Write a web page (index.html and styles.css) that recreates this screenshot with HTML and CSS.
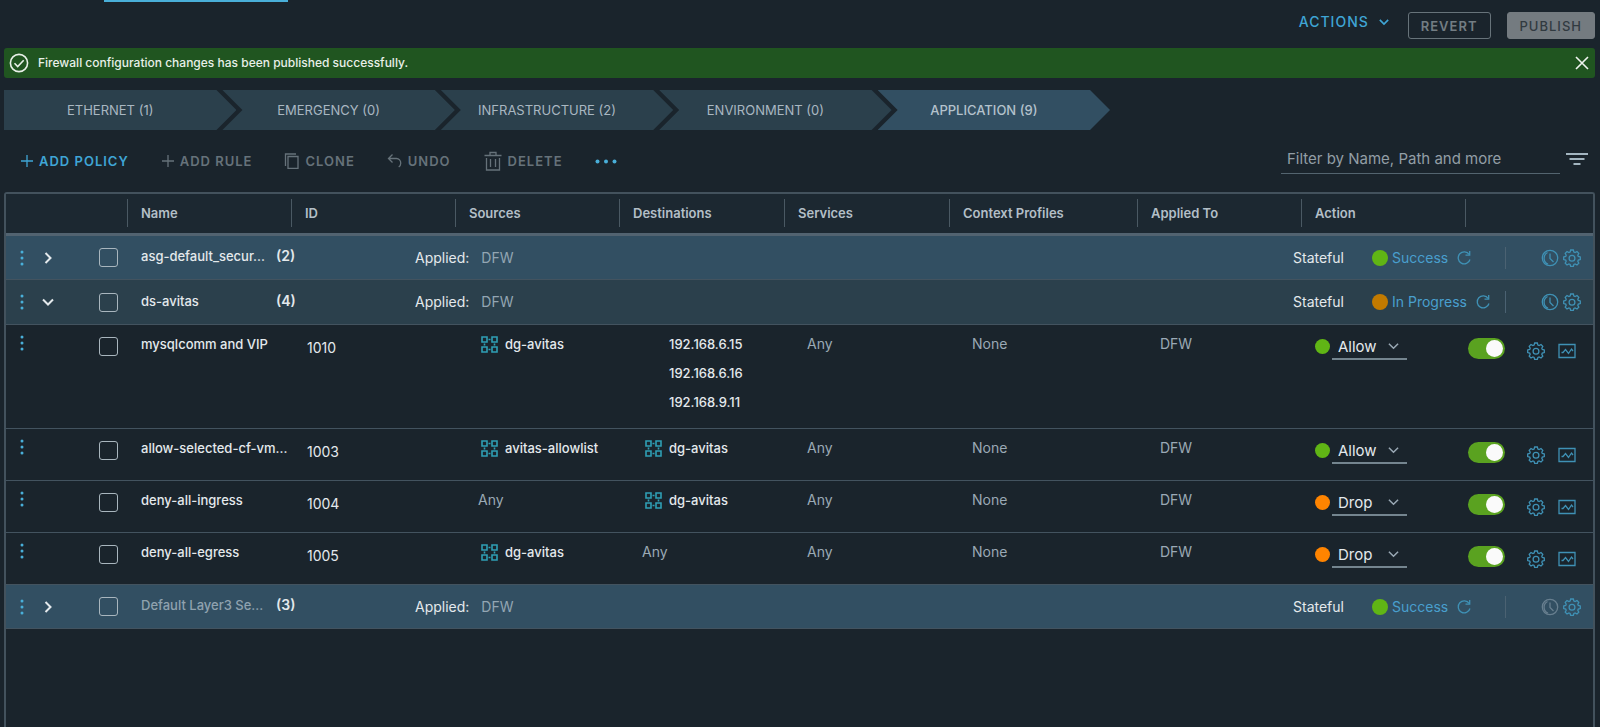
FILE: index.html
```html
<!DOCTYPE html>
<html lang="en">
<head>
<meta charset="utf-8">
<title>Distributed Firewall</title>
<link rel="stylesheet" href="styles.css">
</head>
<body>
<svg class="sprite" aria-hidden="true">
  <symbol id="dots-v" viewBox="0 0 4 16"><circle cx="2" cy="2" r="1.5"/><circle cx="2" cy="8" r="1.5"/><circle cx="2" cy="14" r="1.5"/></symbol>
  <symbol id="dots-h" viewBox="0 0 22 5"><circle cx="2.5" cy="2.5" r="2"/><circle cx="11" cy="2.5" r="2"/><circle cx="19.500" cy="2.500" r="2"/></symbol>
  <symbol id="chev" viewBox="0 0 12 12"><path d="M1 3.500 L6 8.500 L11 3.500"/></symbol>
  <symbol id="plus" viewBox="0 0 14 14"><path d="M7 1v12M1 7h12"/></symbol>
  <symbol id="gear" viewBox="0 0 18 18"><path d="M7.700 1h2.600l.6 2 1.200.5 1.900-1 1.800 1.800-1 1.900.5 1.200 2 .6v2.500l-2 .6-.5 1.200 1 1.900-1.800 1.800-1.900-1-1.200.5-.6 2H7.700l-.6-2-1.200-.5-1.900 1-1.800-1.800 1-1.900-.5-1.200-2-.6V8l2-.6.5-1.200-1-1.900L4 2.500l1.900 1 1.200-.5z"/><circle cx="9" cy="9.200" r="2.900"/></symbol>
  <symbol id="clock" viewBox="0 0 18 18"><circle cx="9" cy="9" r="7.700"/><path d="M7 15.200A6.500 6.500 0 0 1 6.500 3.500"/><path d="M9 4.500v5l3.500 3.500"/></symbol>
  <symbol id="refresh" viewBox="0 0 16 16"><path d="M13.200 4.500A6 6 0 1 0 14 9.500"/><path d="M13.700 1v4.200H9.500"/></symbol>
  <symbol id="chart" viewBox="0 0 18 16"><path d="M1 1.500h16v13H1z"/><path d="M3.500 9.500h1.500l2.500-3 3 4 3-4.500 1.500 2"/></symbol>
  <symbol id="group" viewBox="0 0 17 17"><path d="M1 1h5v5H1zM11 1h5v5h-5zM1 11h5v5H1zM11 11h5v5h-5z"/><path d="M7.500 3.500h2M7.500 13.500h2M3.500 7.500v2M13.500 7.500v2"/></symbol>
</svg>

<header class="top">
  <div class="tab-line"></div>
  <div class="top-actions">
    <button class="actions" type="button">ACTIONS <svg class="i i10"><use href="#chev"/></svg></button>
    <button class="btn" type="button" disabled>REVERT</button>
    <button class="btn solid" type="button" disabled>PUBLISH</button>
  </div>
</header>

<main class="page">
  <div class="banner" role="status">
    <svg class="i i20" viewBox="0 0 20 20"><circle cx="10" cy="10" r="8.600"/><path d="M5.500 10.300l3.200 3.200 6-6.200"/></svg>
    <span class="banner-text">Firewall configuration changes has been published successfully.</span>
    <button class="icon-btn" type="button" aria-label="Close"><svg class="i i14" viewBox="0 0 14 14"><path d="M1 1l12 12M13 1L1 13"/></svg></button>
  </div>

  <nav class="steps">
    <a class="step first" href="#">ETHERNET (1)</a>
    <a class="step" href="#">EMERGENCY (0)</a>
    <a class="step" href="#">INFRASTRUCTURE (2)</a>
    <a class="step" href="#">ENVIRONMENT (0)</a>
    <a class="step active" href="#">APPLICATION (9)</a>
  </nav>

  <div class="toolbar">
    <div class="tools">
      <button class="tool on" type="button"><svg class="i i14"><use href="#plus"/></svg>ADD POLICY</button>
      <button class="tool" type="button"><svg class="i i14"><use href="#plus"/></svg>ADD RULE</button>
      <button class="tool" type="button"><svg class="i i16" viewBox="0 0 16 16"><path d="M4 3.500h10v12H4z"/><path d="M1.500 13V1H12"/></svg>CLONE</button>
      <button class="tool" type="button"><svg class="i i16" viewBox="0 0 16 16"><path d="M5.500 1.500L1.500 5.500l4 4M1.500 5.500h8a4.200 4.200 0 0 1 4.200 4.500v.5a4 4 0 0 1-2 3.500"/></svg>UNDO</button>
      <button class="tool" type="button"><svg class="i i20" viewBox="0 0 20 20"><path d="M1.500 4.500h17M7 4V1.500h6V4M3.500 7v12h13V7M7.500 8v8M12.500 8v8"/></svg>DELETE</button>
      <button class="tool on" type="button" aria-label="More"><svg class="dots-h"><use href="#dots-h"/></svg></button>
    </div>
    <div class="filter">
      <input class="filter-input" type="text" placeholder="Filter by Name, Path and more" aria-label="Filter">
      <button class="icon-btn" type="button" aria-label="Filter options"><svg class="i filter-icon" viewBox="0 0 24 14"><path d="M1 2h22M4.500 7h15M8.500 12h7"/></svg></button>
    </div>
  </div>

  <div class="grid">
    <table class="rules">
      <colgroup><col class="c-ctl"><col class="c-std"><col class="c-std"><col class="c-std"><col class="c-dst"><col class="c-dst"><col class="c-ctx"><col class="c-std"><col class="c-std"><col class="c-end"></colgroup>
      <thead>
        <tr>
          <td></td>
          <th><div class="th">Name</div></th><th><div class="th">ID</div></th><th><div class="th">Sources</div></th><th><div class="th">Destinations</div></th><th><div class="th">Services</div></th><th><div class="th">Context Profiles</div></th><th><div class="th">Applied To</div></th><th><div class="th">Action</div></th>
          <td><div class="th"></div></td>
        </tr>
      </thead>
      <tbody>
        <tr class="policy">
          <td><div class="ctl"><button class="icon-btn" type="button" aria-label="Menu"><svg class="dots-v"><use href="#dots-v"/></svg></button><button class="icon-btn expand shut" type="button" aria-label="Expand"><svg class="i i12"><use href="#chev"/></svg></button><input class="check" type="checkbox" aria-label="Select asg-default_secur..."></div></td>
          <td><div class="pname"><span>asg-default_secur...</span><b>(2)</b></div></td>
          <td colspan="5"><div class="applied">Applied:<span>DFW</span></div></td>
          <td colspan="3"><div class="state"><span class="mode">Stateful</span><div class="status"><i class="dot ok"></i><a href="#">Success</a><button class="icon-btn" type="button" aria-label="Refresh"><svg class="i i16"><use href="#refresh"/></svg></button></div><div class="ends"><button class="icon-btn" type="button" aria-label="Schedule"><svg class="i i18"><use href="#clock"/></svg></button><button class="icon-btn" type="button" aria-label="Settings"><svg class="i i18"><use href="#gear"/></svg></button></div></div></td>
        </tr>
        <tr class="policy open">
          <td><div class="ctl"><button class="icon-btn" type="button" aria-label="Menu"><svg class="dots-v"><use href="#dots-v"/></svg></button><button class="icon-btn expand" type="button" aria-label="Collapse"><svg class="i i12"><use href="#chev"/></svg></button><input class="check" type="checkbox" aria-label="Select ds-avitas"></div></td>
          <td><div class="pname"><span>ds-avitas</span><b>(4)</b></div></td>
          <td colspan="5"><div class="applied">Applied:<span>DFW</span></div></td>
          <td colspan="3"><div class="state"><span class="mode">Stateful</span><div class="status"><i class="dot busy"></i><a href="#">In Progress</a><button class="icon-btn" type="button" aria-label="Refresh"><svg class="i i16"><use href="#refresh"/></svg></button></div><div class="ends"><button class="icon-btn" type="button" aria-label="Schedule"><svg class="i i18"><use href="#clock"/></svg></button><button class="icon-btn" type="button" aria-label="Settings"><svg class="i i18"><use href="#gear"/></svg></button></div></div></td>
        </tr>
        <tr class="rule">
          <td><div class="ctl"><button class="icon-btn" type="button" aria-label="Menu"><svg class="dots-v"><use href="#dots-v"/></svg></button><input class="check" type="checkbox" aria-label="Select mysqlcomm and VIP"></div></td>
          <td class="name">mysqlcomm and VIP</td>
          <td class="id">1010</td>
          <td class="ref"><div class="obj"><svg class="i group"><use href="#group"/></svg>dg-avitas</div></td>
          <td class="ref"><div class="ip">192.168.6.15</div><div class="ip">192.168.6.16</div><div class="ip">192.168.9.11</div></td>
          <td class="dim">Any</td><td class="dim">None</td><td class="dim">DFW</td>
          <td class="act"><div class="pick"><i class="dot ok"></i><div class="drop"><select aria-label="Action"><option>Allow</option><option>Drop</option></select><svg class="i i12"><use href="#chev"/></svg></div></div></td>
          <td class="act"><div class="opts"><input class="toggle" type="checkbox" checked aria-label="Enabled"><button class="icon-btn" type="button" aria-label="Settings"><svg class="i i18"><use href="#gear"/></svg></button><button class="icon-btn" type="button" aria-label="Statistics"><svg class="i chart"><use href="#chart"/></svg></button></div></td>
        </tr>
        <tr class="rule">
          <td><div class="ctl"><button class="icon-btn" type="button" aria-label="Menu"><svg class="dots-v"><use href="#dots-v"/></svg></button><input class="check" type="checkbox" aria-label="Select allow-selected-cf-vm..."></div></td>
          <td class="name">allow-selected-cf-vm...</td>
          <td class="id">1003</td>
          <td class="ref"><div class="obj"><svg class="i group"><use href="#group"/></svg>avitas-allowlist</div></td>
          <td class="ref"><div class="obj"><svg class="i group"><use href="#group"/></svg>dg-avitas</div></td>
          <td class="dim">Any</td><td class="dim">None</td><td class="dim">DFW</td>
          <td class="act"><div class="pick"><i class="dot ok"></i><div class="drop"><select aria-label="Action"><option>Allow</option><option>Drop</option></select><svg class="i i12"><use href="#chev"/></svg></div></div></td>
          <td class="act"><div class="opts"><input class="toggle" type="checkbox" checked aria-label="Enabled"><button class="icon-btn" type="button" aria-label="Settings"><svg class="i i18"><use href="#gear"/></svg></button><button class="icon-btn" type="button" aria-label="Statistics"><svg class="i chart"><use href="#chart"/></svg></button></div></td>
        </tr>
        <tr class="rule">
          <td><div class="ctl"><button class="icon-btn" type="button" aria-label="Menu"><svg class="dots-v"><use href="#dots-v"/></svg></button><input class="check" type="checkbox" aria-label="Select deny-all-ingress"></div></td>
          <td class="name">deny-all-ingress</td>
          <td class="id">1004</td>
          <td class="dim">Any</td>
          <td class="ref"><div class="obj"><svg class="i group"><use href="#group"/></svg>dg-avitas</div></td>
          <td class="dim">Any</td><td class="dim">None</td><td class="dim">DFW</td>
          <td class="act"><div class="pick"><i class="dot warn"></i><div class="drop"><select aria-label="Action"><option>Allow</option><option selected>Drop</option></select><svg class="i i12"><use href="#chev"/></svg></div></div></td>
          <td class="act"><div class="opts"><input class="toggle" type="checkbox" checked aria-label="Enabled"><button class="icon-btn" type="button" aria-label="Settings"><svg class="i i18"><use href="#gear"/></svg></button><button class="icon-btn" type="button" aria-label="Statistics"><svg class="i chart"><use href="#chart"/></svg></button></div></td>
        </tr>
        <tr class="rule">
          <td><div class="ctl"><button class="icon-btn" type="button" aria-label="Menu"><svg class="dots-v"><use href="#dots-v"/></svg></button><input class="check" type="checkbox" aria-label="Select deny-all-egress"></div></td>
          <td class="name">deny-all-egress</td>
          <td class="id">1005</td>
          <td class="ref"><div class="obj"><svg class="i group"><use href="#group"/></svg>dg-avitas</div></td>
          <td class="dim">Any</td>
          <td class="dim">Any</td><td class="dim">None</td><td class="dim">DFW</td>
          <td class="act"><div class="pick"><i class="dot warn"></i><div class="drop"><select aria-label="Action"><option>Allow</option><option selected>Drop</option></select><svg class="i i12"><use href="#chev"/></svg></div></div></td>
          <td class="act"><div class="opts"><input class="toggle" type="checkbox" checked aria-label="Enabled"><button class="icon-btn" type="button" aria-label="Settings"><svg class="i i18"><use href="#gear"/></svg></button><button class="icon-btn" type="button" aria-label="Statistics"><svg class="i chart"><use href="#chart"/></svg></button></div></td>
        </tr>
        <tr class="policy default">
          <td><div class="ctl"><button class="icon-btn" type="button" aria-label="Menu"><svg class="dots-v"><use href="#dots-v"/></svg></button><button class="icon-btn expand shut" type="button" aria-label="Expand"><svg class="i i12"><use href="#chev"/></svg></button><input class="check" type="checkbox" aria-label="Select Default Layer3 Se..."></div></td>
          <td><div class="pname"><span>Default Layer3 Se...</span><b>(3)</b></div></td>
          <td colspan="5"><div class="applied">Applied:<span>DFW</span></div></td>
          <td colspan="3"><div class="state"><span class="mode">Stateful</span><div class="status"><i class="dot ok"></i><a href="#">Success</a><button class="icon-btn" type="button" aria-label="Refresh"><svg class="i i16"><use href="#refresh"/></svg></button></div><div class="ends"><button class="icon-btn off" type="button" aria-label="Schedule" disabled><svg class="i i18"><use href="#clock"/></svg></button><button class="icon-btn" type="button" aria-label="Settings"><svg class="i i18"><use href="#gear"/></svg></button></div></div></td>
        </tr>
      </tbody>
    </table>
  </div>
</main>
</body>
</html>
```
FILE: styles.css
```css
* { box-sizing: border-box; }

body {
  margin: 0;
  min-height: 100vh;
  display: flex;
  flex-direction: column;
  background: #1a242c;
  color: #e4e9ec;
  font: 14px/20px Inter, "Open Sans", sans-serif;
}

button, input, select { font: inherit; color: inherit; }
button { padding: 0; border: 0; background: none; }
a { color: inherit; text-decoration: none; }

.sprite { display: none; }
.i { display: block; flex: none; fill: none; stroke: currentColor; stroke-width: 1.3px; }
.i10 { width: 10px; height: 10px; stroke-width: 2px; }
.i12 { width: 12px; height: 12px; }
.i14 { width: 14px; height: 14px; }
.i16 { width: 16px; height: 16px; }
.i18 { width: 18px; height: 18px; }
.i20 { width: 20px; height: 20px; }
.group { width: 17px; height: 17px; color: #2f9fb5; stroke-width: 1.6px; }
.chart { width: 18px; height: 16px; }
.filter-icon { width: 24px; height: 14px; color: #a3b5c0; stroke-width: 2px; }
.dots-v { display: block; width: 4px; height: 16px; fill: #49afd9; }
.dots-h { display: block; width: 22px; height: 5px; fill: #49afd9; }
.icon-btn { display: block; color: #3f91b5; }

.top { height: 48px; display: flex; justify-content: space-between; padding: 0 5px 0 104px; }
.tab-line { width: 184px; height: 2px; background: #49afd9; }
.top-actions { display: flex; align-items: flex-start; padding-top: 12px; }
.actions {
  display: flex;
  align-items: center;
  gap: 10px;
  margin-right: 19px;
  color: #3fa5d5;
  font-weight: 500;
  letter-spacing: 1px;
}
.btn {
  height: 27px;
  padding: 0 12px;
  margin-right: 16px;
  border: 1px solid #67737a;
  border-radius: 3px;
  color: #737d83;
  font-size: 13px;
  font-weight: 600;
  letter-spacing: 1px;
}
.btn.solid { margin-right: 0; background: #747b80; border-color: #747b80; color: #313a40; font-weight: 500; }

.page { flex: 1; display: flex; flex-direction: column; padding: 0 5px 0 4px; }

.banner {
  height: 30px;
  display: flex;
  align-items: center;
  gap: 9px;
  padding: 0 6px 0 5px;
  border-radius: 3px;
  background: #205520;
  color: #e8f0e8;
  font-size: 12px;
  font-weight: 500;
}
.banner .i { stroke-width: 1.6px; }
.banner-text { flex: 1; }
.banner .icon-btn { color: #f0f4f0; }

.steps { display: flex; max-width: 1106px; margin-top: 12px; }
.step {
  flex: 1;
  height: 40px;
  display: flex;
  align-items: center;
  justify-content: center;
  padding-right: 20px;
  margin-left: -14px;
  background: #2b404c;
  color: #a9b7c1;
  font-size: 13px;
  clip-path: polygon(0 0, calc(100% - 20px) 0, 100% 50%, calc(100% - 20px) 100%, 0 100%, 20px 50%);
}
.step.first { margin-left: 0; clip-path: polygon(0 0, calc(100% - 20px) 0, 100% 50%, calc(100% - 20px) 100%, 0 100%); }
.step.active { background: #324f62; color: #b4c2cc; font-weight: 500; }

.toolbar { height: 62px; display: flex; align-items: center; justify-content: space-between; padding-left: 16px; }
.tools { display: flex; align-items: center; gap: 32px; }
.tool { display: flex; align-items: center; gap: 5px; color: #66727a; font-size: 13px; font-weight: 600; letter-spacing: 1px; }
.tool.on { color: #3fa5d5; }
.filter { display: flex; align-items: center; gap: 5px; padding: 0 6px 4px 0; }
.filter-input {
  width: 279px;
  height: 30px;
  padding: 0 6px;
  border: 0;
  border-bottom: 1px solid #53646f;
  background: none;
  font-size: 15px;
}
.filter-input::placeholder { color: #929ea6; opacity: 1; }

.grid { flex: 1; border: 2px solid #43525d; border-bottom: 0; border-radius: 3px 3px 0 0; }
.rules { width: 100%; table-layout: fixed; border-collapse: separate; border-spacing: 0; }
.c-ctl { width: 121px; }
.c-std { width: 164px; }
.c-dst { width: 165px; }
.c-ctx { width: 188px; }
.c-end { width: 128px; }
.rules td, .rules th { padding: 0; text-align: left; white-space: nowrap; border-bottom: 1px solid #43535f; }
.rules thead td, .rules thead th { height: 42px; padding-bottom: 1px; border-bottom: 3px solid #526370; background: #1c2831; }
.th {
  height: 28px;
  padding-left: 13px;
  border-left: 1px solid #4a5963;
  color: #b3bfc7;
  font-size: 13px;
  font-weight: 600;
  line-height: 28px;
}

.ctl { display: flex; align-items: center; padding-left: 14px; }
.expand { width: 12px; margin-left: 18px; color: #e4e9ec; }
.expand .i { stroke-width: 2px; }
.shut .i { transform: rotate(-90deg); }
.check {
  width: 19px;
  height: 19px;
  margin: 0 9px 0 auto;
  appearance: none;
  border: 1px solid #a9b6be;
  border-radius: 3px;
}

.policy td { height: 44px; background: #324f62; }
.policy.open td { height: 45px; background: #2b404c; }
.pname { display: flex; padding: 0 0 3px 14px; font-size: 13px; font-weight: 500; }
.pname span { flex: none; width: 135px; }
.pname b { font-size: 14px; font-weight: 600; }
.default .pname span { color: #8fa2af; }
.default .off { color: #687f8f; }
.applied { display: flex; gap: 12px; padding-left: 124px; }
.applied span { color: #93a6b3; }
.state { display: flex; align-items: center; justify-content: flex-end; padding-right: 12px; }
.mode { width: 79px; }
.status { display: flex; align-items: center; gap: 4px; width: 134px; height: 22px; color: #499fce; border-right: 1px solid #4b6272; }
.status .icon-btn { margin-left: 4px; }
.dot { flex: none; width: 16px; height: 16px; border-radius: 50%; }
.ok { background: #60b515; }
.busy { background: #c27a00; }
.warn { background: #ff8400; }
.ends { display: flex; gap: 4px; padding-left: 35px; }

.rule td { height: 52px; padding: 5px 0 11px; line-height: 29px; vertical-align: top; }
.rule .ctl { height: 29px; align-items: flex-start; }
.rule .ctl .icon-btn { padding-top: 5px; }
.rule .check { margin-top: 7px; }
.rule .name { padding-left: 14px; font-size: 13px; font-weight: 500; }
.rule .id { padding: 8px 0 0 16px; }
.rule .dim { padding: 4px 0 0 23px; color: #9aa9b5; }
.rule .ref { padding-left: 26px; font-size: 13px; font-weight: 500; }
.obj { display: flex; align-items: center; gap: 7px; }
.ip { padding-left: 24px; }
.rule .act { padding-top: 7px; padding-bottom: 0; }
.pick { display: flex; align-items: center; padding-left: 14px; gap: 2px; }
.pick .dot { width: 15px; height: 15px; }
.drop { display: grid; grid-template-columns: 56px 19px; align-items: center; color: #9aa9b5; }
.drop select {
  grid-area: 1 / 1 / 2 / 3;
  height: 28px;
  padding: 0 0 0 6px;
  appearance: none;
  border: 0;
  border-bottom: 2px solid #74858f;
  background: none;
  color: #e4e9ec;
  font-size: 15px;
}
.drop .i { grid-area: 1 / 2 / 2 / 3; width: 11px; stroke-width: 1.6px; }
.opts { display: flex; align-items: center; padding-left: 3px; height: 32px; }
.opts .icon-btn { padding-top: 5px; margin-left: 22px; }
.opts .icon-btn + .icon-btn { margin-left: 13px; }
.toggle {
  width: 37px;
  height: 21px;
  margin: 0;
  padding: 2px;
  display: flex;
  justify-content: flex-end;
  appearance: none;
  border-radius: 11px;
  background: #5aa220;
}
.toggle::before { content: ""; width: 17px; height: 17px; border-radius: 50%; background: #fafafa; }
```
